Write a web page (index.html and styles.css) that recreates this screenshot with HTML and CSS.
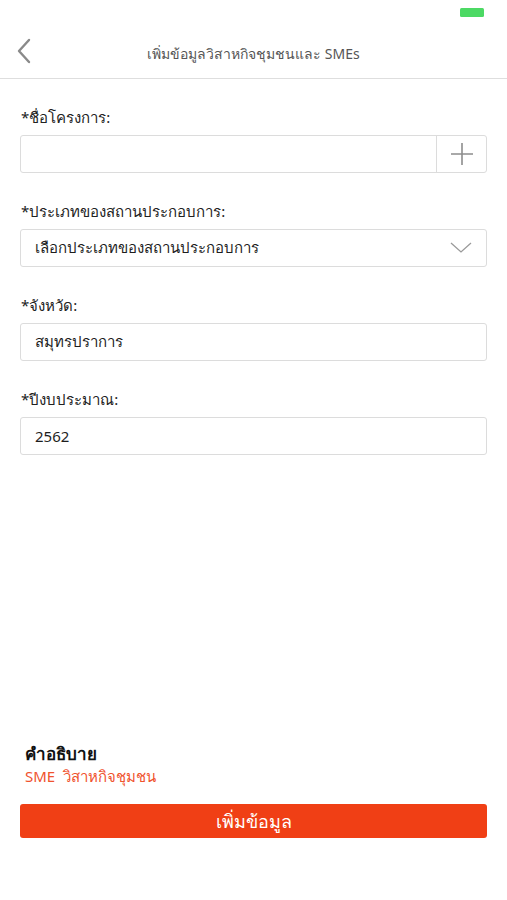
FILE: index.html
```html
<!DOCTYPE html>
<html lang="th">
<head>
<meta charset="utf-8">
<title>เพิ่มข้อมูลวิสาหกิจชุมชนและ SMEs</title>
<link rel="stylesheet" href="styles.css">
</head>
<body>
<div class="screen">
  <div class="status">
    <div class="battery"></div>
  </div>
  <header class="nav">
    <svg class="back" width="16" height="26" viewBox="0 0 16 26"><path d="M13 2 L3 13 L13 24" fill="none" stroke="#8a8a8a" stroke-width="2.4" stroke-linecap="round" stroke-linejoin="round"/></svg>
    <div class="title">เพิ่มข้อมูลวิสาหกิจชุมชนและ SMEs</div>
  </header>
  <main class="form">
    <div class="field">
      <div class="label">*ชื่อโครงการ:</div>
      <div class="box split">
        <div class="grow"></div>
        <div class="plus">
          <svg width="26" height="26" viewBox="0 0 26 26"><path d="M13 2 V24 M2 13 H24" stroke="#8d8d8d" stroke-width="1.6"/></svg>
        </div>
      </div>
    </div>
    <div class="field">
      <div class="label">*ประเภทของสถานประกอบการ:</div>
      <div class="box select">
        <span class="value">เลือกประเภทของสถานประกอบการ</span>
        <svg width="22" height="12" viewBox="0 0 22 12"><path d="M1 1 L11 10 L21 1" fill="none" stroke="#9a9a9a" stroke-width="1.3"/></svg>
      </div>
    </div>
    <div class="field">
      <div class="label">*จังหวัด:</div>
      <div class="box"><span class="value">สมุทรปราการ</span></div>
    </div>
    <div class="field">
      <div class="label">*ปีงบประมาณ:</div>
      <div class="box"><span class="value">2562</span></div>
    </div>
  </main>
  <section class="desc">
    <div class="desc-title">คำอธิบาย</div>
    <div class="desc-text">SME&nbsp; วิสาหกิจชุมชน</div>
  </section>
  <div class="actions">
    <button class="submit">เพิ่มข้อมูล</button>
  </div>
</div>
</body>
</html>
```
FILE: styles.css
```css
* { box-sizing: border-box; }
html, body { margin: 0; padding: 0; background: #fff; }
body {
  font-family: "Noto Sans", "Liberation Sans", "DejaVu Sans", sans-serif;
  color: #222;
  width: 507px;
  height: 900px;
  overflow: hidden;
}
.screen { display: flex; flex-direction: column; height: 900px; }
.status { height: 30px; display: flex; justify-content: flex-end; padding: 8px 23px 0 0; }
.battery { width: 24px; height: 9px; background: #4cd964; border-radius: 1.5px; }
.nav {
  height: 49px;
  display: flex;
  align-items: center;
  justify-content: center;
  position: relative;
  border-bottom: 1px solid #dedede;
}
.back { position: absolute; left: 16px; top: 8px; }
.title { font-size: 14px; color: #555; }
.form { padding: 29px 20px 0 20px; display: flex; flex-direction: column; gap: 29px; }
.field { display: flex; flex-direction: column; }
.label { font-size: 15px; color: #222; height: 18px; line-height: 18px; margin: 0 0 9px 1px; }
.box {
  height: 38px;
  border: 1.5px solid #dcdcdc;
  border-radius: 3px;
  display: flex;
  align-items: center;
  padding: 0 14px;
}
.box.split { padding: 0; }
.grow { flex: 1; height: 100%; }
.plus {
  width: 50px;
  height: 100%;
  border-left: 1.5px solid #dcdcdc;
  display: flex;
  align-items: center;
  justify-content: center;
}
.select { justify-content: space-between; padding-right: 14px; }
.value { font-size: 15px; color: #1e1e1e; }
.desc { margin-top: auto; padding: 0 25px; }
.desc-title { font-size: 17px; font-weight: bold; color: #111; line-height: 22px; }
.desc-text { font-size: 15px; color: #f0532e; line-height: 20px; margin-top: 1px; }
.actions { padding: 18px 20px 62px 20px; }
.submit {
  width: 100%;
  height: 34px;
  border: none;
  border-radius: 3px;
  background: #f03f15;
  color: #fff;
  font-family: inherit;
  font-size: 18px;
  display: block;
}
```
